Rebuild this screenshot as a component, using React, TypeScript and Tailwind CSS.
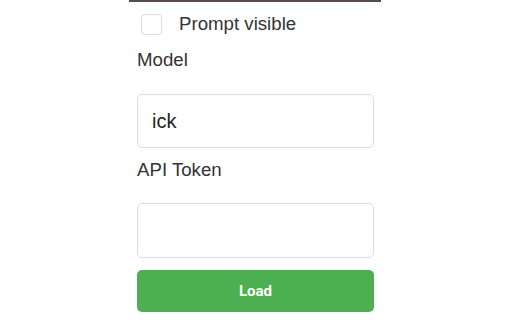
export default function App() {
  return (
    <div className="w-[512px] h-[320px] bg-white overflow-hidden font-['Liberation_Sans',Arial,sans-serif] text-[#333333]">
      <div className="ml-[129px] w-[252px] h-[2px] bg-[#564a4e]" />

      <div className="ml-[137px] w-[237px] flex flex-col">
        {/* checkbox row */}
        <label className="mt-[8px] flex items-center h-[28px] pl-[4px]">
          <span className="w-[21px] h-[21px] rounded-[4px] border border-[#d9dde2] bg-white" />
          <span className="ml-[17px] text-[18.67px] leading-[28px]">Prompt visible</span>
        </label>

        <div className="mt-[8px] text-[18.67px] leading-[28px]">Model</div>
        <div className="mt-[20px] h-[54px] rounded-[5px] border border-[#d9dde2] flex items-center px-[14px]">
          <span className="text-[20px] text-[#222222]">ick</span>
        </div>

        <div className="mt-[8px] text-[18.67px] leading-[28px]">API Token</div>
        <div className="mt-[19px] h-[55px] rounded-[5px] border border-[#d9dde2]" />

        <button className="mt-[12px] h-[42px] rounded-[5px] bg-[#4caf50] text-white font-['Roboto',sans-serif] font-bold text-[15px]">
          Load
        </button>
      </div>
    </div>
  );
}
